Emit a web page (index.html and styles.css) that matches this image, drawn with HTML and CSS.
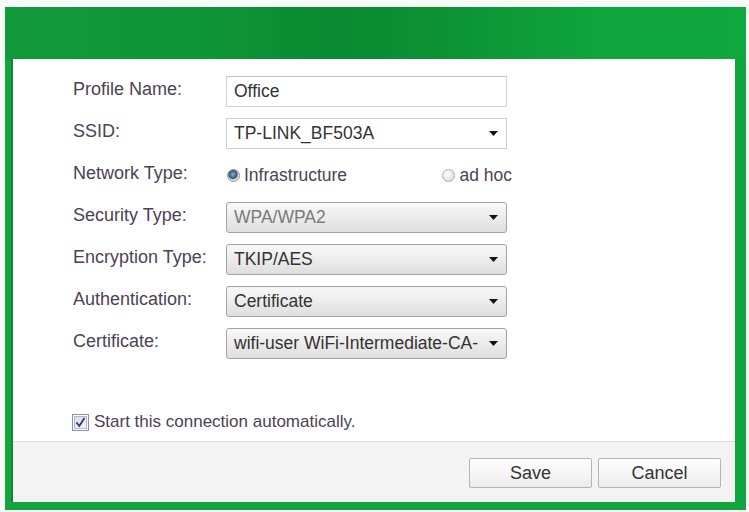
FILE: index.html
```html
<!DOCTYPE html>
<html lang="en">
<head>
    <meta charset="UTF-8">
    <meta name="viewport" content="width=device-width, initial-scale=1.0">
    <title>Profile</title>
    <link rel="stylesheet" href="styles.css">
</head>
<body>

<div class="window">
    <div class="header"></div>

    <div class="panel">
        <div class="form">
            <div class="row">
                <div class="label">Profile Name:</div>
                <div class="field text-field">Office</div>
            </div>
            <div class="row">
                <div class="label">SSID:</div>
                <div class="field text-field combo">
                    <span>TP-LINK_BF503A</span>
                    <svg class="arrow" width="9" height="5" viewBox="0 0 9 5"><path d="M0 0H9L4.5 5Z" fill="#111"/></svg>
                </div>
            </div>
            <div class="row">
                <div class="label">Network Type:</div>
                <div class="radios">
                    <div class="radio-item">
                        <span class="radio checked"></span>
                        <span>Infrastructure</span>
                    </div>
                    <div class="radio-item">
                        <span class="radio"></span>
                        <span>ad hoc</span>
                    </div>
                </div>
            </div>
            <div class="row">
                <div class="label">Security Type:</div>
                <div class="field select faded">
                    <span>WPA/WPA2</span>
                    <svg class="arrow" width="9" height="5" viewBox="0 0 9 5"><path d="M0 0H9L4.5 5Z" fill="#111"/></svg>
                </div>
            </div>
            <div class="row">
                <div class="label">Encryption Type:</div>
                <div class="field select">
                    <span>TKIP/AES</span>
                    <svg class="arrow" width="9" height="5" viewBox="0 0 9 5"><path d="M0 0H9L4.5 5Z" fill="#111"/></svg>
                </div>
            </div>
            <div class="row">
                <div class="label">Authentication:</div>
                <div class="field select">
                    <span>Certificate</span>
                    <svg class="arrow" width="9" height="5" viewBox="0 0 9 5"><path d="M0 0H9L4.5 5Z" fill="#111"/></svg>
                </div>
            </div>
            <div class="row">
                <div class="label">Certificate:</div>
                <div class="field select">
                    <span>wifi-user WiFi-Intermediate-CA-</span>
                    <svg class="arrow" width="9" height="5" viewBox="0 0 9 5"><path d="M0 0H9L4.5 5Z" fill="#111"/></svg>
                </div>
            </div>

            <div class="check-row">
                <svg class="checkbox" width="17" height="17" viewBox="0 0 17 17">
                    <defs>
                        <linearGradient id="cb" x1="0" y1="0" x2="1" y2="1">
                            <stop offset="0" stop-color="#d9dbe6"/>
                            <stop offset="1" stop-color="#f4f4f8"/>
                        </linearGradient>
                    </defs>
                    <rect x="0.5" y="0.5" width="16" height="16" fill="#fff" stroke="#8e8fa3"/>
                    <rect x="2.5" y="2.5" width="12" height="12" fill="url(#cb)" stroke="#b5b7c8"/>
                    <path d="M4.5 8.5L7.3 12L12.5 4" fill="none" stroke="#2c3a78" stroke-width="1.8"/>
                </svg>
                <span>Start this connection automatically.</span>
            </div>
        </div>

        <div class="footer">
            <button class="btn">Save</button>
            <button class="btn">Cancel</button>
        </div>
    </div>
</div>

</body>
</html>
```

FILE: styles.css
```css
body {
    margin: 0;
    padding: 0;
    background: #f7fbf8;
    font-family: "Liberation Sans", Arial, sans-serif;
}
.window {
    margin: 7px 3px 0 5px;
    padding: 0 11px 8px 8px;
    background: #12a53f;
}
.header {
    height: 52px;
    margin: 0 -11px 0 -8px;
    background: linear-gradient(90deg, #129a3a 0%, #0e9636 25%, #0a8a30 45%, #0c9334 60%, #0fa43c 80%, #0ea83d 100%);
}
.panel {
    background: #fff;
    box-shadow: -2px 0 0 #0b8a2f;
}
.form {
    display: flex;
    flex-direction: column;
    gap: 11px;
    padding: 17px 0 9px 60px;
}
.row {
    display: flex;
    align-items: center;
    height: 31px;
}
.label {
    width: 153px;
    margin-top: -5px;
    font-size: 18px;
    color: #4d4255;
}
.field {
    width: 281px;
    height: 31px;
    box-sizing: border-box;
    display: flex;
    align-items: center;
    justify-content: space-between;
    padding: 0 8px 0 7px;
    font-size: 17.5px;
    color: #333;
}
.text-field {
    background: #fff;
    border: 1px solid #d3d3d3;
    border-top-color: #c4c4c4;
}
.combo {
    border-color: #cfcfcf;
}
.select {
    background: linear-gradient(180deg, #f8f8f8 0%, #ececec 50%, #dedede 100%);
    border: 1px solid #a3a3a3;
    border-radius: 3px;
}
.faded {
    color: #7a7a7a;
}
.arrow {
    flex: none;
}
.radios {
    width: 286px;
    display: flex;
    justify-content: space-between;
    font-size: 17.5px;
    color: #4d4255;
}
.radio-item {
    display: flex;
    align-items: center;
    gap: 4px;
}
.radio-item:first-child {
    margin-left: 1px;
}
.radio {
    width: 11px;
    height: 11px;
    border-radius: 50%;
    border: 1px solid #a9adb3;
    background: radial-gradient(circle at 40% 35%, #ffffff 0%, #dfe1e4 70%, #c9cccf 100%);
}
.radio.checked {
    border-color: #8c939b;
    background: radial-gradient(circle at 45% 40%, #8fb0c8 0%, #35566e 45%, #d8dde2 60%, #eef0f2 100%);
}
.check-row {
    display: flex;
    align-items: center;
    gap: 5px;
    height: 20px;
    margin-top: 42px;
    margin-left: -1px;
    font-size: 17px;
    color: #4d4255;
}
.checkbox {
    flex: none;
}
.footer {
    display: flex;
    justify-content: flex-end;
    gap: 6px;
    height: 61px;
    box-sizing: border-box;
    padding: 16px 14px 0 0;
    border-top: 1px solid #dedede;
    background: #f3f3f3;
}
.btn {
    width: 123px;
    height: 30px;
    font-family: "Liberation Sans", Arial, sans-serif;
    font-size: 18px;
    color: #333;
    background: linear-gradient(180deg, #ffffff 0%, #f4f4f4 60%, #ebebeb 100%);
    border: 1px solid #b4b4b4;
    border-radius: 2px;
}
```
